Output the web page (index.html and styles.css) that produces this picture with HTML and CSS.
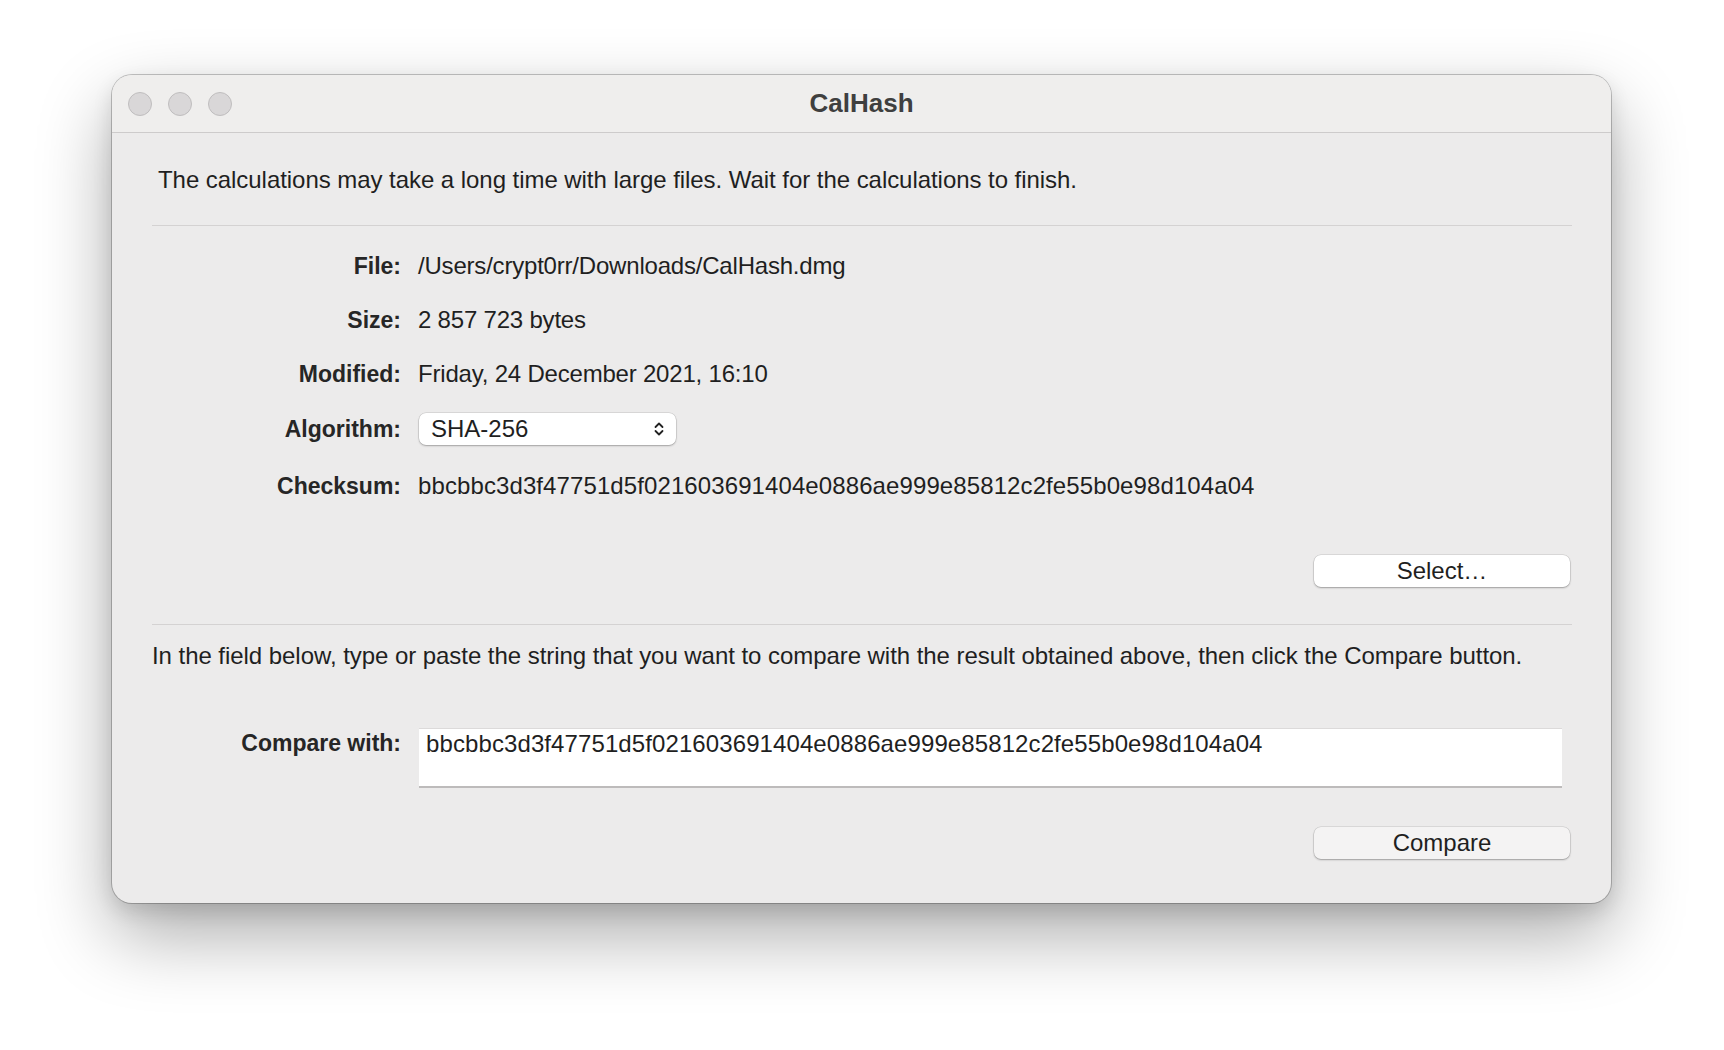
FILE: index.html
```html
<!DOCTYPE html>
<html lang="en">
<head>
    <meta charset="UTF-8">
    <meta name="viewport" content="width=device-width, initial-scale=1.0">
    <title>CalHash</title>
    <link rel="stylesheet" href="styles.css">
</head>
<body>
    <div class="window">
        <div class="titlebar">
            <div class="lights">
                <span class="light"></span>
                <span class="light"></span>
                <span class="light"></span>
            </div>
            <div class="title">CalHash</div>
        </div>
        <div class="content">
            <p class="intro">The calculations may take a long time with large files. Wait for the calculations to finish.</p>
            <div class="sep"></div>

            <div class="info">
                <div class="label">File:</div>
                <div class="value">/Users/crypt0rr/Downloads/CalHash.dmg</div>

                <div class="label">Size:</div>
                <div class="value">2 857 723 bytes</div>

                <div class="label">Modified:</div>
                <div class="value">Friday, 24 December 2021, 16:10</div>

                <div class="label">Algorithm:</div>
                <div class="value">
                    <div class="popup">
                        <span>SHA-256</span>
                        <svg class="chevrons" width="10" height="16" viewBox="0 0 10 16">
                            <path d="M1.5 6 L5 2.5 L8.5 6" fill="none" stroke="#222" stroke-width="1.8" stroke-linecap="round" stroke-linejoin="round"/>
                            <path d="M1.5 10 L5 13.5 L8.5 10" fill="none" stroke="#222" stroke-width="1.8" stroke-linecap="round" stroke-linejoin="round"/>
                        </svg>
                    </div>
                </div>

                <div class="label checksum">Checksum:</div>
                <div class="value checksum hash">bbcbbc3d3f47751d5f021603691404e0886ae999e85812c2fe55b0e98d104a04</div>
            </div>

            <div class="actions select-row">
                <button class="btn btn-white">Select…</button>
            </div>

            <div class="sep"></div>
            <p class="hint">In the field below, type or paste the string that you want to compare with the result obtained above, then click the Compare button.</p>

            <div class="compare-row">
                <div class="label">Compare with:</div>
                <div class="field hash">bbcbbc3d3f47751d5f021603691404e0886ae999e85812c2fe55b0e98d104a04</div>
            </div>

            <div class="actions compare-actions">
                <button class="btn btn-gray">Compare</button>
            </div>
        </div>
    </div>
</body>
</html>
```

FILE: styles.css
```css
body {
    margin: 0;
    padding: 75px 0 0 112px;
    background-color: #ffffff;
    font-family: 'Liberation Sans', Arial, sans-serif;
    color: #1f1f1f;
    height: 1050px;
    box-sizing: border-box;
    overflow: hidden;
}
.window {
    width: 1499px;
    background-color: #ecebeb;
    border-radius: 20px;
    box-shadow: 0 0 0 1px rgba(0, 0, 0, 0.22), 0 32px 75px rgba(0, 0, 0, 0.33), 0 8px 20px rgba(0, 0, 0, 0.12);
    overflow: hidden;
}
.titlebar {
    height: 57px;
    background-color: #efeeed;
    border-bottom: 1px solid #cdcbcb;
    display: flex;
    align-items: center;
    position: relative;
}
.lights {
    display: flex;
    gap: 16px;
    padding-left: 16px;
}
.light {
    width: 22px;
    height: 22px;
    border-radius: 50%;
    background-color: #d9d7d8;
    border: 1px solid #bfbdbe;
}
.title {
    position: absolute;
    left: 0;
    right: 0;
    text-align: center;
    font-weight: bold;
    font-size: 26px;
    color: #3f3f3f;
    pointer-events: none;
}
.content {
    padding: 32px 39px 44px 40px;
}
.intro {
    margin: 0 0 30px 6px;
    font-size: 24px;
    line-height: 30px;
    letter-spacing: -0.05px;
}
.sep {
    height: 1px;
    background-color: #d4d2d2;
}
.info {
    display: grid;
    grid-template-columns: 249px 1fr;
    column-gap: 17px;
    row-gap: 24px;
    margin-top: 25px;
    align-items: center;
}
.label {
    text-align: right;
    font-weight: bold;
    font-size: 23px;
    line-height: 30px;
    color: #262626;
}
.value {
    font-size: 24px;
    line-height: 30px;
    letter-spacing: -0.2px;
}
.hash {
    letter-spacing: 0.1px;
}
.checksum {
    margin-top: 2px;
}
.popup {
    width: 257px;
    height: 32px;
    box-sizing: border-box;
    margin-left: 1px;
    background-color: #ffffff;
    border-radius: 7px;
    box-shadow: 0 0 0 0.5px rgba(0, 0, 0, 0.15), 0 1px 2px rgba(0, 0, 0, 0.25);
    display: flex;
    align-items: center;
    justify-content: space-between;
    padding: 0 12px 0 12px;
    letter-spacing: 0;
}
.actions {
    display: flex;
    justify-content: flex-end;
    padding-right: 2px;
}
.select-row {
    margin-top: 54px;
    margin-bottom: 37px;
}
.btn {
    width: 256px;
    height: 32px;
    font-family: inherit;
    font-size: 24px;
    color: #1f1f1f;
    border: none;
    border-radius: 7px;
    box-shadow: 0 0 0 0.5px rgba(0, 0, 0, 0.14), 0 1px 2px rgba(0, 0, 0, 0.28);
    padding: 0;
}
.btn-white {
    background-color: #ffffff;
}
.btn-gray {
    background-color: #f4f3f3;
}
.hint {
    margin: 16px 0 0 0;
    font-size: 24px;
    line-height: 30px;
    letter-spacing: -0.05px;
}
.compare-row {
    display: grid;
    grid-template-columns: 249px 1fr;
    column-gap: 17px;
    margin-top: 57px;
    padding-right: 10px;
}
.field {
    height: 60px;
    margin-left: 1px;
    box-sizing: border-box;
    background-color: #ffffff;
    border-top: 1px solid #dcdada;
    border-bottom: 2px solid #bdbbbb;
    padding: 0 7px;
    font-size: 24px;
    line-height: 30px;
}
.compare-actions {
    margin-top: 39px;
}
```
